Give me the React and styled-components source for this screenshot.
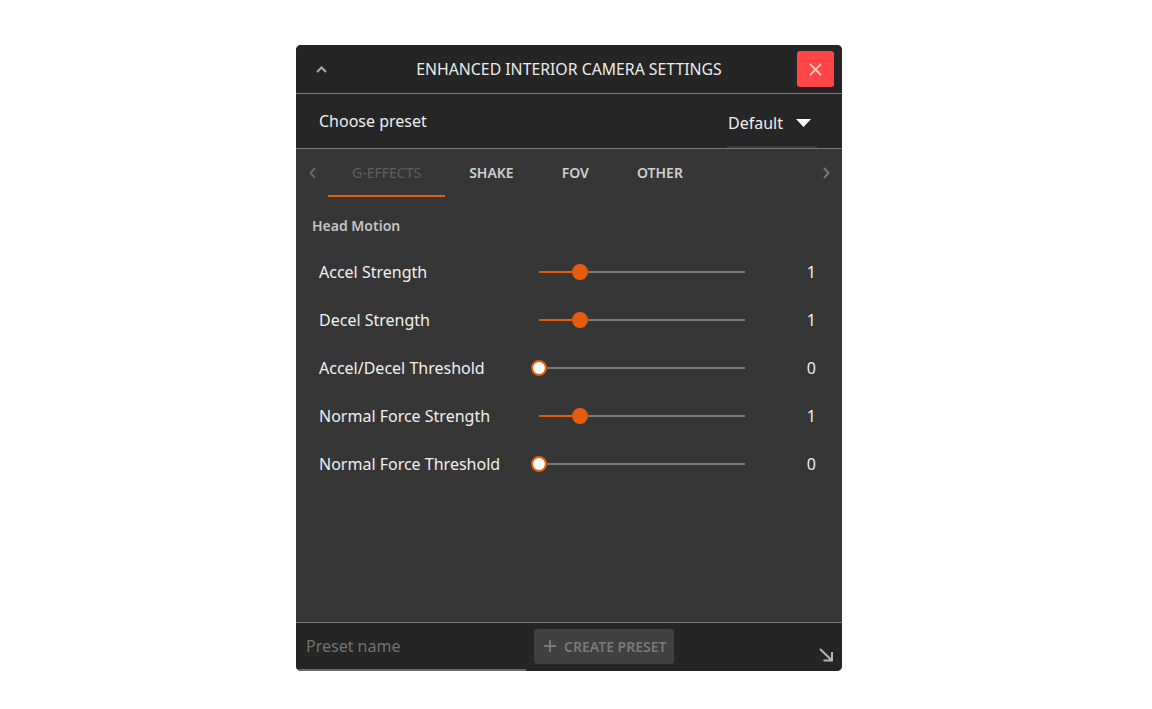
import React from 'react';
import styled, { createGlobalStyle, css } from 'styled-components';

const GlobalStyle = createGlobalStyle`
  body {
    margin: 0;
    background: #fff;
    font-family: 'Noto Sans', 'Open Sans', sans-serif;
  }
`;

const ORANGE = '#e35d0b';
const LINE = '#7b7b7b';

const Panel = styled.div`
  margin: 45px 0 0 296px;
  width: 546px;
  height: 626px;
  display: flex;
  flex-direction: column;
  border-radius: 5px;
  overflow: hidden;
  background: #363636;
`;

const Header = styled.div`
  height: 48px;
  flex: none;
  display: grid;
  grid-template-columns: 1fr auto 1fr;
  align-items: center;
  background: #252525;
  border-bottom: 1px solid ${LINE};
`;

const Collapse = styled.div`
  padding-left: 20px;
  display: flex;
  align-items: center;
  color: #aaa;
`;

const Title = styled.div`
  color: #ececec;
  font-size: 15.8px;
  padding-bottom: 1px;
`;

const CloseWrap = styled.div`
  display: flex;
  justify-content: flex-end;
  padding-right: 8px;
`;

const CloseButton = styled.div`
  width: 37px;
  height: 36px;
  border-radius: 3px;
  background: #ff4545;
  display: flex;
  align-items: center;
  justify-content: center;
`;

const PresetRow = styled.div`
  height: 54px;
  flex: none;
  display: flex;
  align-items: center;
  justify-content: space-between;
  padding-left: 23px;
  padding-right: 25px;
  background: #262626;
  border-bottom: 1px solid ${LINE};
`;

const PresetLabel = styled.div`
  color: #eee;
  font-size: 16px;
  padding-bottom: 1px;
`;

const Select = styled.div`
  align-self: stretch;
  width: 90px;
  box-sizing: border-box;
  display: flex;
  align-items: center;
  justify-content: space-between;
  padding: 6px 6px 0 1px;
  color: #eee;
  font-size: 16px;
  border-bottom: 2px solid #3b3b3b;
`;

const Body = styled.div`
  flex: 1;
  display: flex;
  flex-direction: column;
  background: #363636;
`;

const TabBar = styled.div`
  height: 48px;
  display: flex;
  align-items: stretch;
`;

const Arrow = styled.div`
  width: 32px;
  display: flex;
  align-items: center;
  justify-content: center;
  color: ${(p) => p.color};
  ${(p) =>
    p.right &&
    css`
      margin-left: auto;
    `};
`;

const Tab = styled.div`
  padding: 1px 24px 0 24px;
  display: flex;
  align-items: center;
  font-size: 14px;
  font-weight: 600;
  color: #cfcfcf;
  border-bottom: 2px solid transparent;
  box-sizing: border-box;
  ${(p) =>
    p.active &&
    css`
      color: #5e5e5e;
      font-weight: 400;
      border-bottom-color: ${ORANGE};
    `};
`;

const Section = styled.div`
  padding: 19px 0 0 16px;
  font-size: 14px;
  font-weight: 600;
  color: #c4c4c4;
  margin-bottom: 13px;
`;

const Row = styled.div`
  height: 48px;
  display: flex;
  align-items: center;
  padding: 0 26px 0 23px;
`;

const Label = styled.div`
  width: 220px;
  color: #f0f0f0;
  font-size: 16px;
`;

const Slider = styled.div`
  position: relative;
  width: 206px;
  height: 2px;
  background: #777;
`;

const Fill = styled.div`
  height: 100%;
  background: ${ORANGE};
`;

const Thumb = styled.div`
  position: absolute;
  top: 50%;
  width: 16px;
  height: 16px;
  box-sizing: border-box;
  border-radius: 50%;
  transform: translate(-50%, -50%);
  background: ${(p) => (p.empty ? '#fff' : ORANGE)};
  border: 2px solid ${ORANGE};
`;

const Value = styled.div`
  flex: 1;
  text-align: right;
  color: #f0f0f0;
  font-size: 16px;
`;

const Footer = styled.div`
  height: 48px;
  flex: none;
  display: flex;
  align-items: center;
  background: #252525;
  border-top: 1px solid ${LINE};
`;

const NameInput = styled.div`
  align-self: stretch;
  width: 230px;
  box-sizing: border-box;
  display: flex;
  align-items: center;
  padding: 0 0 0 10px;
  color: #727272;
  font-size: 16px;
  border-bottom: 2px solid #676b75;
`;

const CreateButton = styled.div`
  margin-left: 8px;
  margin-bottom: 2px;
  width: 140px;
  height: 35px;
  box-sizing: border-box;
  border-radius: 3px;
  background: #404040;
  display: flex;
  align-items: center;
  gap: 7px;
  padding-left: 9px;
  color: #797979;
  font-size: 14px;
  font-weight: 600;
`;

const Resize = styled.div`
  align-self: flex-end;
  margin: 0 8px 9px auto;
  display: flex;
  color: #b5b5b5;
`;

const settings = [
  { label: 'Accel Strength', value: 1 },
  { label: 'Decel Strength', value: 1 },
  { label: 'Accel/Decel Threshold', value: 0 },
  { label: 'Normal Force Strength', value: 1 },
  { label: 'Normal Force Threshold', value: 0 },
];

const MAX = 5;

const App = () => (
  <>
    <GlobalStyle />
    <Panel>
      <Header>
        <Collapse>
          <svg width="11" height="7" viewBox="0 0 11 7">
            <path d="M1 6 L5.5 1.5 L10 6" fill="none" stroke="currentColor" strokeWidth="2" />
          </svg>
        </Collapse>
        <Title>ENHANCED INTERIOR CAMERA SETTINGS</Title>
        <CloseWrap>
          <CloseButton>
            <svg width="13" height="13" viewBox="0 0 13 13">
              <path d="M1 1 L12 12 M12 1 L1 12" stroke="#ffc4c4" strokeWidth="2" />
            </svg>
          </CloseButton>
        </CloseWrap>
      </Header>
      <PresetRow>
        <PresetLabel>Choose preset</PresetLabel>
        <Select>
          <span>Default</span>
          <svg width="15" height="8" viewBox="0 0 15 8">
            <path d="M0 0 L15 0 L7.5 8 Z" fill="#fff" />
          </svg>
        </Select>
      </PresetRow>
      <Body>
        <TabBar>
          <Arrow color="#666">
            <svg width="7" height="12" viewBox="0 0 7 12">
              <path d="M6 1 L1.5 6 L6 11" fill="none" stroke="currentColor" strokeWidth="2" />
            </svg>
          </Arrow>
          <Tab active>G-EFFECTS</Tab>
          <Tab>SHAKE</Tab>
          <Tab>FOV</Tab>
          <Tab>OTHER</Tab>
          <Arrow right color="#777">
            <svg width="7" height="12" viewBox="0 0 7 12">
              <path d="M1 1 L5.5 6 L1 11" fill="none" stroke="currentColor" strokeWidth="2" />
            </svg>
          </Arrow>
        </TabBar>
        <Section>Head Motion</Section>
        {settings.map((s) => (
          <Row key={s.label}>
            <Label>{s.label}</Label>
            <Slider>
              <Fill style={{ width: `${(s.value / MAX) * 100}%` }} />
              <Thumb empty={s.value === 0} style={{ left: `${(s.value / MAX) * 100}%` }} />
            </Slider>
            <Value>{s.value}</Value>
          </Row>
        ))}
      </Body>
      <Footer>
        <NameInput>Preset name</NameInput>
        <CreateButton>
          <svg width="14" height="14" viewBox="0 0 14 14">
            <path d="M7 1 V13 M1 7 H13" stroke="currentColor" strokeWidth="2" />
          </svg>
          CREATE PRESET
        </CreateButton>
        <Resize>
          <svg width="15" height="14" viewBox="0 0 15 14">
            <path d="M1 1 L13 12.5 M13 4 V12.5 H4.5" fill="none" stroke="currentColor" strokeWidth="2" />
          </svg>
        </Resize>
      </Footer>
    </Panel>
  </>
);

export default App;
